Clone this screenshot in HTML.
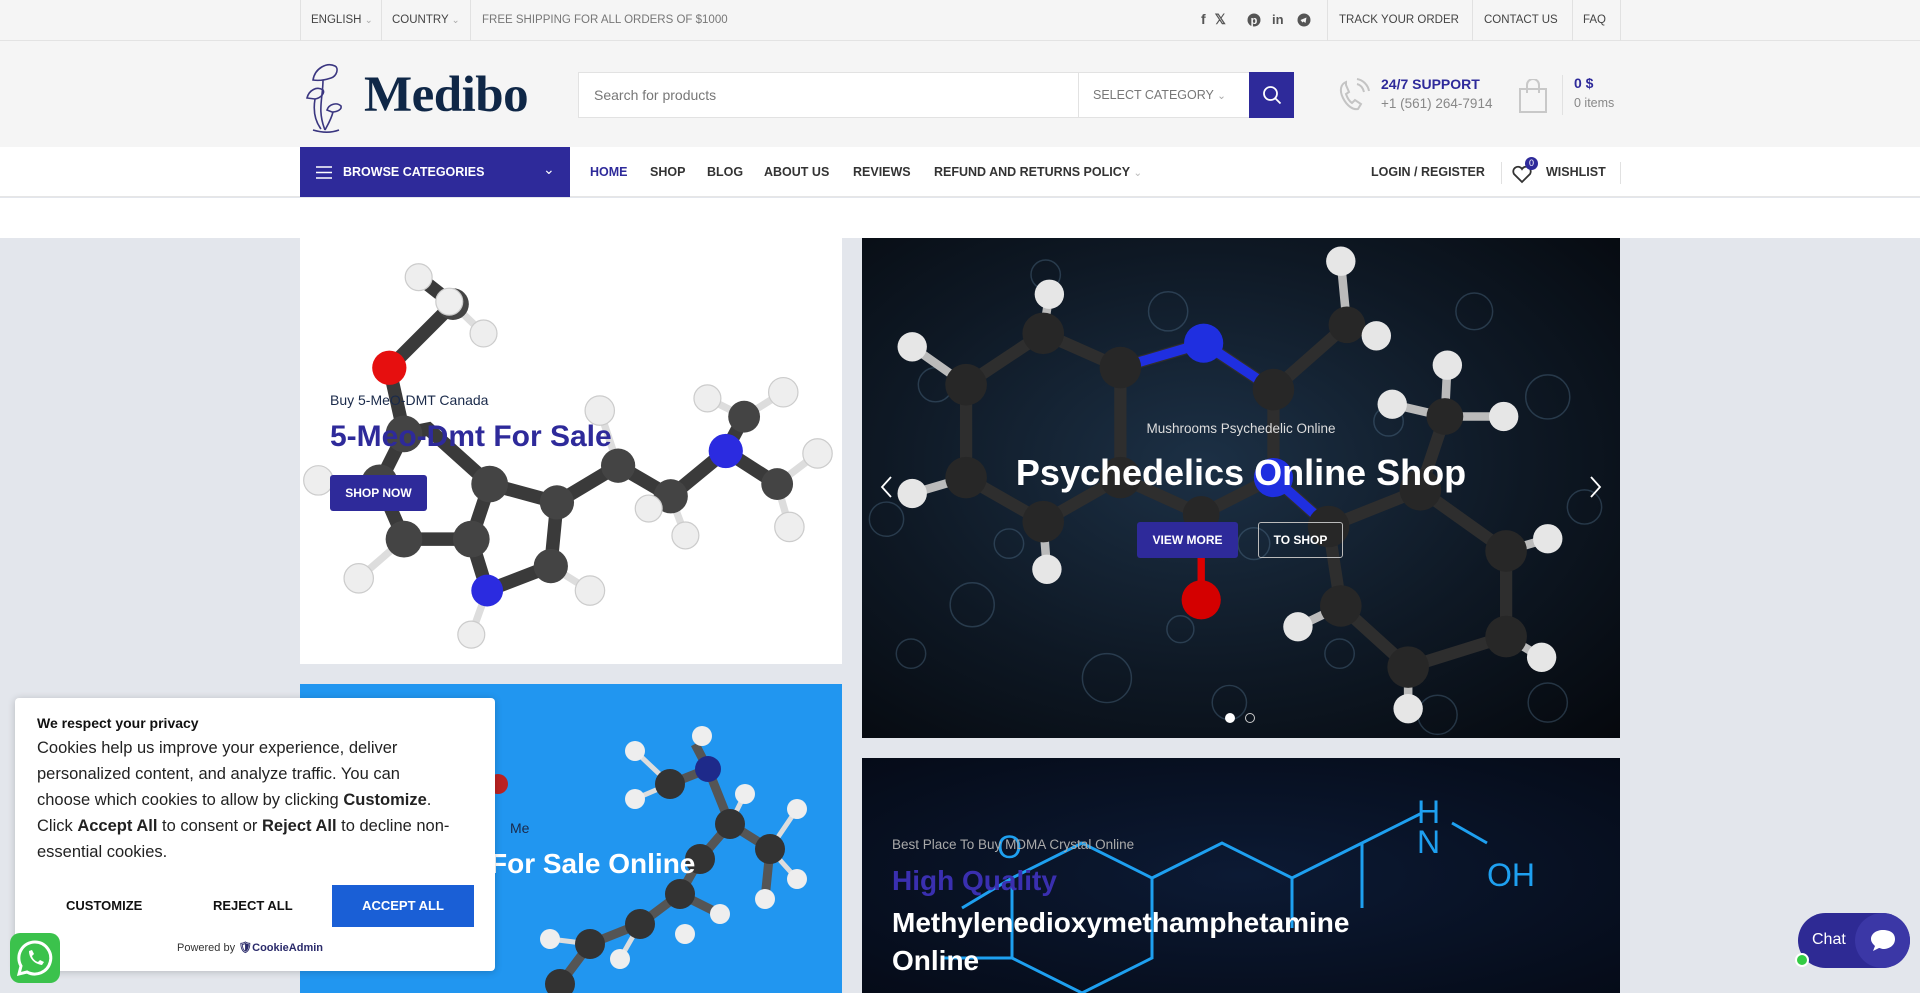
<!DOCTYPE html>
<html><head><meta charset="utf-8"><style>
*{margin:0;padding:0;box-sizing:border-box}
body{width:1920px;height:993px;overflow:hidden;background:#e3e6ec;font-family:"Liberation Sans",sans-serif;position:relative}
.abs{position:absolute}
.top{left:0;top:0;width:1920px;height:41px;background:#f5f5f5;border-bottom:1px solid #e3e3e3}
.top span{position:absolute;top:14px;font-size:11.5px;color:#444;white-space:nowrap}
.sep{position:absolute;width:1px;background:#e1e1e1}
.hdr{left:0;top:41px;width:1920px;height:106px;background:#f5f5f5}
.nav{left:0;top:147px;width:1920px;height:50px;background:#fff;border-bottom:1px solid #e6e6e6}
.nav a{position:absolute;top:18px;font-size:12.5px;font-weight:bold;color:#333;text-decoration:none;white-space:nowrap}
.strip{left:0;top:198px;width:1920px;height:40px;background:#fff}
.btn{position:absolute;font-weight:bold;font-size:12px;color:#fff;text-align:center;border-radius:3px}
</style></head><body>

<div class="abs top">
 <div class="sep" style="left:300px;top:0;height:41px"></div>
 <span style="left:311px">ENGLISH <small style="color:#aaa">⌄</small></span>
 <div class="sep" style="left:381px;top:0;height:41px"></div>
 <span style="left:392px">COUNTRY <small style="color:#aaa">⌄</small></span>
 <div class="sep" style="left:470px;top:0;height:41px"></div>
 <span style="left:482px;color:#777">FREE SHIPPING FOR ALL ORDERS OF $1000</span>
 <span style="left:1201px;top:11px;font-size:14px;font-weight:bold;color:#555;letter-spacing:9px">f𝕏</span>
 <svg class="abs" style="left:1247px;top:13px" width="14" height="14" viewBox="0 0 14 14"><circle cx="7" cy="7" r="6.5" fill="#555"/><text x="7" y="11" font-size="11" fill="#f5f5f5" text-anchor="middle" font-weight="bold">p</text></svg>
 <span style="left:1272px;top:12px;font-size:13px;font-weight:bold;color:#555">in</span>
 <svg class="abs" style="left:1297px;top:13px" width="14" height="14" viewBox="0 0 14 14"><circle cx="7" cy="7" r="6.5" fill="#555"/><path d="M3.5 7l6-2.5-1 5.5-2-1.5-1 1z" fill="#f5f5f5"/></svg>
 <div class="sep" style="left:1327px;top:0;height:41px"></div>
 <span style="left:1339px">TRACK YOUR ORDER</span>
 <div class="sep" style="left:1472px;top:0;height:41px"></div>
 <span style="left:1484px">CONTACT US</span>
 <div class="sep" style="left:1572px;top:0;height:41px"></div>
 <span style="left:1583px">FAQ</span>
 <div class="sep" style="left:1620px;top:0;height:41px"></div>
</div>

<div class="abs hdr">
 <svg class="abs" style="left:305px;top:19px" width="58" height="75" viewBox="0 0 58 75" fill="none" stroke="#3a3680" stroke-width="1.6">
  <path d="M8 20c2-12 14-18 22-14 4 2 2 10-4 12-6 2-12 3-18 2z"/><path d="M18 20c0 18-6 30 2 50"/>
  <path d="M2 38c2-8 10-12 16-8 2 3-2 8-8 9z"/><path d="M10 39c-2 12 0 22 6 30"/>
  <path d="M22 50c2-6 10-8 14-4 1 3-3 6-9 6z"/><path d="M28 52c-2 8-6 14-8 18"/>
  <path d="M8 70c10 3 18 3 26 0"/>
 </svg>
 <div class="abs" style="left:364px;top:25px;font-family:'Liberation Serif',serif;font-weight:bold;font-size:51px;color:#0f2747;letter-spacing:-0.5px">Medibo</div>
 <div class="abs" style="left:578px;top:31px;width:501px;height:46px;background:#fff;border:1px solid #e2e2e2"><span class="abs" style="left:15px;top:14px;font-size:14px;color:#777">Search for products</span></div>
 <div class="abs" style="left:1078px;top:31px;width:172px;height:46px;background:#fff;border:1px solid #e2e2e2"><span class="abs" style="left:14px;top:15px;font-size:12.5px;color:#777">SELECT CATEGORY <small style="color:#aaa">⌄</small></span></div>
 <div class="abs" style="left:1249px;top:31px;width:45px;height:46px;background:#2e2a9a"><svg class="abs" style="left:13px;top:13px" width="20" height="20" viewBox="0 0 20 20" fill="none" stroke="#fff" stroke-width="1.8"><circle cx="8.5" cy="8.5" r="6.5"/><path d="M13.5 13.5l5 5"/></svg></div>
 <svg class="abs" style="left:1338px;top:37px" width="32" height="34" viewBox="0 0 32 34" fill="none" stroke="#c4c4c4" stroke-width="2"><path d="M8 4c-5 2-7 8-3 16 4 8 10 12 15 11l3-5-6-4-3 3c-3-2-5-6-6-9l3-2-3-7z"/><path d="M19 6c4 1 6 4 7 8M19 1c6 1 11 6 12 12"/></svg>
 <div class="abs" style="left:1381px;top:35px;font-size:14px;font-weight:bold;color:#2e2a9a">24/7 SUPPORT</div>
 <div class="abs" style="left:1381px;top:55px;font-size:13.5px;color:#888">+1 (561) 264-7914</div>
 <svg class="abs" style="left:1518px;top:38px" width="30" height="34" viewBox="0 0 30 34" fill="none" stroke="#c8c8c8" stroke-width="2"><path d="M2 10h26v23H2z"/><path d="M9 14V6a6 6 0 0112 0v8"/></svg>
 <div class="sep" style="left:1562px;top:34px;height:40px"></div>
 <div class="abs" style="left:1574px;top:34px;font-size:14px;font-weight:bold;color:#2e2a9a">0 $</div>
 <div class="abs" style="left:1574px;top:55px;font-size:12.5px;color:#888">0 items</div>
</div>

<div class="abs nav">
 <div class="abs" style="left:300px;top:0;width:270px;height:50px;background:#2e2a9a">
  <svg class="abs" style="left:16px;top:19px" width="16" height="13"><path d="M0 1h16M0 6.5h16M0 12h16" stroke="#fff" stroke-width="1.6"/></svg>
  <span class="abs" style="left:43px;top:18px;font-size:12.5px;font-weight:bold;color:#fff">BROWSE CATEGORIES</span>
  <span class="abs" style="left:243px;top:14px;font-size:14px;color:#fff">⌄</span>
 </div>
 <a style="left:590px;color:#2e2a9a">HOME</a><a style="left:650px">SHOP</a><a style="left:707px">BLOG</a><a style="left:764px">ABOUT US</a><a style="left:853px">REVIEWS</a><a style="left:934px">REFUND AND RETURNS POLICY <small style="color:#bbb;font-weight:normal">⌄</small></a>
 <a style="left:1371px">LOGIN / REGISTER</a>
 <div class="sep" style="left:1501px;top:15px;height:22px"></div>
 <svg class="abs" style="left:1511px;top:17px" width="22" height="20" viewBox="0 0 22 20" fill="none" stroke="#333" stroke-width="1.8"><path d="M11 18L3 10a4.5 4.5 0 018-5 4.5 4.5 0 018 5z"/></svg>
 <div class="abs" style="left:1525px;top:10px;width:13px;height:13px;border-radius:50%;background:#2e2a9a;color:#fff;font-size:9px;text-align:center;line-height:13px">0</div>
 <a style="left:1546px">WISHLIST</a>
 <div class="sep" style="left:1620px;top:15px;height:22px"></div>
</div>
<div class="abs strip"></div>

<!-- left banner -->
<div class="abs" style="left:300px;top:238px;width:542px;height:426px;background:#fff;overflow:hidden">
 <svg class="abs" style="left:0;top:0" width="542" height="426" viewBox="0 0 443 348" preserveAspectRatio="none">
  <g stroke="#3a3a3a" stroke-width="11" fill="none"><path d="M97 32L125 54 73 106 85 160 105 156 155 201 140 246 85 246 65 200 85 160M140 246L153 288 205 268 210 216 155 201M210 216L260 186 303 211 348 174 363 146M348 174L390 201"/></g>
  <g stroke="#ddd" stroke-width="6" fill="none"><path d="M125 54L150 78M260 186L245 141M363 146L333 131M363 146L395 126M390 201L423 176M390 201L400 236M303 211L315 243M303 211L285 221M153 288L140 324M65 200L15 198M85 246L48 278M205 268L237 288"/></g>
  <g fill="#444"><circle cx="125" cy="54" r="13"/><circle cx="85" cy="160" r="15"/><circle cx="155" cy="201" r="15"/><circle cx="140" cy="246" r="15"/><circle cx="85" cy="246" r="15"/><circle cx="65" cy="200" r="15"/><circle cx="205" cy="268" r="14"/><circle cx="210" cy="216" r="14"/><circle cx="260" cy="186" r="14"/><circle cx="303" cy="211" r="14"/><circle cx="363" cy="146" r="13"/><circle cx="390" cy="201" r="13"/></g>
  <circle cx="73" cy="106" r="14" fill="#e60f0f"/><circle cx="153" cy="288" r="13" fill="#2b2be0"/><circle cx="348" cy="174" r="14" fill="#2b2be0"/>
  <g fill="#eee" stroke="#ccc"><circle cx="97" cy="32" r="11"/><circle cx="150" cy="78" r="11"/><circle cx="245" cy="141" r="12"/><circle cx="333" cy="131" r="11"/><circle cx="395" cy="126" r="12"/><circle cx="423" cy="176" r="12"/><circle cx="400" cy="236" r="12"/><circle cx="315" cy="243" r="11"/><circle cx="285" cy="221" r="11"/><circle cx="140" cy="324" r="11"/><circle cx="15" cy="198" r="12"/><circle cx="48" cy="278" r="12"/><circle cx="237" cy="288" r="12"/><circle cx="122" cy="52" r="11"/></g>
 </svg>
 <div class="abs" style="left:30px;top:154px;font-size:14px;color:#1a2a4a">Buy 5-MeO-DMT Canada</div>
 <div class="abs" style="left:30px;top:182px;font-size:30px;font-weight:bold;color:#2e2a9a">5-Meo-Dmt For Sale</div>
 <div class="btn" style="left:30px;top:237px;width:97px;height:36px;line-height:36px;background:#2e2a9a">SHOP NOW</div>
</div>

<!-- slider -->
<div class="abs" style="left:862px;top:238px;width:758px;height:500px;overflow:hidden;background:radial-gradient(ellipse at 45% 45%,#1c3045 0%,#0e1824 55%,#05080d 100%)">
 <svg class="abs" style="left:0;top:0" width="758" height="500" viewBox="0 0 619 409" preserveAspectRatio="none">
  <g fill="none" stroke="#5d7d9c" stroke-opacity=".35" stroke-width="1.2">
   <circle cx="60" cy="120" r="14"/><circle cx="90" cy="300" r="18"/><circle cx="40" cy="340" r="12"/><circle cx="250" cy="60" r="16"/><circle cx="500" cy="60" r="15"/><circle cx="560" cy="130" r="18"/><circle cx="590" cy="220" r="14"/><circle cx="470" cy="390" r="16"/><circle cx="200" cy="360" r="20"/><circle cx="300" cy="380" r="14"/><circle cx="120" cy="250" r="12"/><circle cx="560" cy="380" r="16"/><circle cx="320" cy="250" r="13"/><circle cx="430" cy="150" r="12"/><circle cx="20" cy="230" r="14"/><circle cx="260" cy="320" r="11"/><circle cx="390" cy="340" r="12"/><circle cx="150" cy="30" r="12"/>
  </g>
  <g stroke="#2e2e2e" stroke-width="10" fill="none"><path d="M148 78L211 106 211 196 148 232 85 196 85 120zM211 106L279 86 336 124 336 196 277 226 211 196M336 124L396 71M336 196L381 236 456 206 526 256 526 326 446 351 391 301 381 236M456 206L476 146"/></g>
  <path d="M211 106L279 86 336 124M336 196L381 236" stroke="#1f2fe0" stroke-width="8" fill="none"/>
  <path d="M277 226L277 296" stroke="#d00" stroke-width="6"/>
  <g stroke="#bbb" stroke-width="7" fill="none"><path d="M148 78L153 46M85 120L41 89M85 196L41 209M148 232L151 271M396 71L391 19M396 71L420 80M476 146L478 104M476 146L433 136M476 146L524 146M526 256L560 246M526 326L555 343M446 351L446 385M391 301L356 318"/></g>
  <g fill="#272727"><circle cx="148" cy="78" r="17"/><circle cx="211" cy="106" r="17"/><circle cx="211" cy="196" r="17"/><circle cx="148" cy="232" r="17"/><circle cx="85" cy="196" r="17"/><circle cx="85" cy="120" r="17"/><circle cx="336" cy="124" r="17"/><circle cx="277" cy="226" r="15"/><circle cx="396" cy="71" r="15"/><circle cx="381" cy="236" r="17"/><circle cx="456" cy="206" r="17"/><circle cx="526" cy="256" r="17"/><circle cx="526" cy="326" r="17"/><circle cx="446" cy="351" r="17"/><circle cx="391" cy="301" r="17"/><circle cx="476" cy="146" r="15"/></g>
  <circle cx="279" cy="86" r="16" fill="#1f2fe0"/><circle cx="336" cy="196" r="16" fill="#1f2fe0"/><circle cx="277" cy="296" r="16" fill="#d40000"/>
  <g fill="#e6e6e6"><circle cx="153" cy="46" r="12"/><circle cx="41" cy="89" r="12"/><circle cx="41" cy="209" r="12"/><circle cx="151" cy="271" r="12"/><circle cx="391" cy="19" r="12"/><circle cx="420" cy="80" r="12"/><circle cx="478" cy="104" r="12"/><circle cx="433" cy="136" r="12"/><circle cx="524" cy="146" r="12"/><circle cx="560" cy="246" r="12"/><circle cx="555" cy="343" r="12"/><circle cx="446" cy="385" r="12"/><circle cx="356" cy="318" r="12"/></g>
 </svg>
 <div class="abs" style="left:0;width:758px;top:183px;text-align:center;font-size:13.5px;color:#ddd">Mushrooms Psychedelic Online</div>
 <div class="abs" style="left:0;width:758px;top:214px;text-align:center;font-size:36px;font-weight:bold;color:#fff">Psychedelics Online Shop</div>
 <div class="btn" style="left:275px;top:284px;width:101px;height:36px;line-height:36px;background:#2e2a9a">VIEW MORE</div>
 <div class="btn" style="left:396px;top:284px;width:85px;height:36px;line-height:34px;border:1.5px solid #bbb">TO SHOP</div>
 <svg class="abs" style="left:17px;top:237px" width="14" height="24"><path d="M12 2L3 12l9 10" stroke="#fff" stroke-width="1.8" fill="none"/></svg>
 <svg class="abs" style="left:727px;top:237px" width="14" height="24"><path d="M2 2l9 10-9 10" stroke="#fff" stroke-width="1.8" fill="none"/></svg>
 <div class="abs" style="left:363px;top:475px;width:10px;height:10px;border-radius:50%;background:#fff"></div>
 <div class="abs" style="left:383px;top:475px;width:10px;height:10px;border-radius:50%;border:1.5px solid #ccc"></div>
</div>

<!-- lower left banner -->
<div class="abs" style="left:300px;top:684px;width:542px;height:309px;background:#2196f0;overflow:hidden">
 <svg class="abs" style="left:0;top:0" width="542" height="309" viewBox="0 0 542 309">
  <g stroke="#555" stroke-width="9" fill="none"><path d="M370 100L408 85 430 140 470 165 465 215M430 140L400 175 380 210 340 240 290 260 260 300M380 210L420 230M408 85L395 60"/></g>
  <g stroke="#ddd" stroke-width="5" fill="none"><path d="M370 100L335 67M370 100L335 115M430 140L445 110M470 165L497 125M470 165L497 195M340 240L320 275M290 260L250 255"/></g>
  <g fill="#333"><circle cx="370" cy="100" r="15"/><circle cx="430" cy="140" r="15"/><circle cx="470" cy="165" r="15"/><circle cx="400" cy="175" r="15"/><circle cx="380" cy="210" r="15"/><circle cx="340" cy="240" r="15"/><circle cx="290" cy="260" r="15"/><circle cx="260" cy="300" r="15"/></g>
  <circle cx="408" cy="85" r="13" fill="#1e2a8a"/><circle cx="198" cy="100" r="10" fill="#b22"/>
  <g fill="#eee"><circle cx="402" cy="52" r="10"/><circle cx="335" cy="67" r="10"/><circle cx="335" cy="115" r="10"/><circle cx="445" cy="110" r="10"/><circle cx="497" cy="125" r="10"/><circle cx="497" cy="195" r="10"/><circle cx="465" cy="215" r="10"/><circle cx="420" cy="230" r="10"/><circle cx="385" cy="250" r="10"/><circle cx="320" cy="275" r="10"/><circle cx="250" cy="255" r="10"/></g>
 </svg>
 <div class="abs" style="left:210px;top:136px;font-size:14px;color:#1a2a4a">Me</div>
 <div class="abs" style="left:190px;top:164px;font-size:28px;font-weight:bold;color:#fff">For Sale Online</div>
</div>

<!-- lower right banner -->
<div class="abs" style="left:862px;top:758px;width:758px;height:235px;background:radial-gradient(ellipse at 50% 50%,#0c1a34 0%,#050b18 100%);overflow:hidden">
 <svg class="abs" style="left:0;top:0" width="758" height="235" viewBox="0 0 758 235" fill="none" stroke="#1ea0f0" stroke-width="3">
  <path d="M150 120L220 85 290 120 290 200 220 235M150 120L150 200 220 235M290 120L360 85 430 120 500 85M500 85L500 150M430 120L430 170M500 85L560 55M590 65L625 85"/>
  <path d="M100 150L150 120M80 200L150 200"/>
  <text x="555" y="65" fill="#1ea0f0" stroke="none" font-size="32" font-family="Liberation Sans">H</text>
  <text x="555" y="95" fill="#1ea0f0" stroke="none" font-size="32" font-family="Liberation Sans">N</text>
  <text x="625" y="128" fill="#1ea0f0" stroke="none" font-size="32" font-family="Liberation Sans">OH</text>
  <text x="135" y="100" fill="#1ea0f0" stroke="none" font-size="32" font-family="Liberation Sans">O</text>
 </svg>
 <div class="abs" style="left:30px;top:79px;font-size:13.5px;color:#aaa">Best Place To Buy MDMA Crystal Online</div>
 <div class="abs" style="left:30px;top:107px;font-size:28px;font-weight:bold;color:#3a2fb0">High Quality</div>
 <div class="abs" style="left:30px;top:146px;font-size:28px;font-weight:bold;color:#fff;line-height:38px">Methylenedioxymethamphetamine<br>Online</div>
</div>

<!-- cookie -->
<div class="abs" style="left:15px;top:698px;width:480px;height:273px;background:#fff;border-radius:4px;box-shadow:0 1px 8px rgba(0,0,0,.2)">
 <div class="abs" style="left:22px;top:17px;font-size:14px;font-weight:bold;color:#111">We respect your privacy</div>
 <div class="abs" style="left:22px;top:37px;font-size:16.5px;line-height:26px;color:#222;white-space:nowrap">Cookies help us improve your experience, deliver<br>personalized content, and analyze traffic. You can<br>choose which cookies to allow by clicking <b>Customize</b>.<br>Click <b>Accept All</b> to consent or <b>Reject All</b> to decline non-<br>essential cookies.</div>
 <div class="abs" style="left:51px;top:200px;font-size:13px;font-weight:bold;color:#111">CUSTOMIZE</div>
 <div class="abs" style="left:198px;top:200px;font-size:13px;font-weight:bold;color:#111">REJECT ALL</div>
 <div class="abs" style="left:317px;top:187px;width:142px;height:42px;background:#1a5fd6;color:#fff;font-size:13px;font-weight:bold;text-align:center;line-height:42px">ACCEPT ALL</div>
 <div class="abs" style="left:162px;top:243px;font-size:11px;color:#333">Powered by <b style="color:#2a2a6a">🛡CookieAdmin</b></div>
</div>
<div class="abs" style="left:10px;top:933px;width:50px;height:50px;border-radius:10px;background:#3bc24c">
 <svg width="50" height="50" viewBox="0 0 50 50" fill="none" stroke="#fff" stroke-width="3"><path d="M25 9a16 16 0 00-14 24l-2 8 8-2a16 16 0 108-30z"/><path d="M19 18c0 7 5 13 13 14l2-3-4-2-2 2c-3-1-5-3-6-6l2-2-2-4z" fill="#fff" stroke="none"/></svg>
</div>

<!-- chat -->
<div class="abs" style="left:1798px;top:913px;width:112px;height:55px;border-radius:28px;background:#2e2a94">
 <span class="abs" style="left:14px;top:18px;font-size:16px;color:#fff">Chat</span>
 <div class="abs" style="left:57px;top:0;width:55px;height:55px;border-radius:50%;background:#3b37a6"></div>
 <svg class="abs" style="left:72px;top:16px" width="26" height="24"><path d="M13 1C6 1 1 5 1 10c0 3 2 5 4 7l-2 5 6-3c1 0 3 1 4 1 7 0 12-4 12-10S20 1 13 1z" fill="#fff"/></svg>
 <div class="abs" style="left:-3px;top:40px;width:14px;height:14px;border-radius:50%;background:#3c4;border:2px solid #fff"></div>
</div>
</body></html>
